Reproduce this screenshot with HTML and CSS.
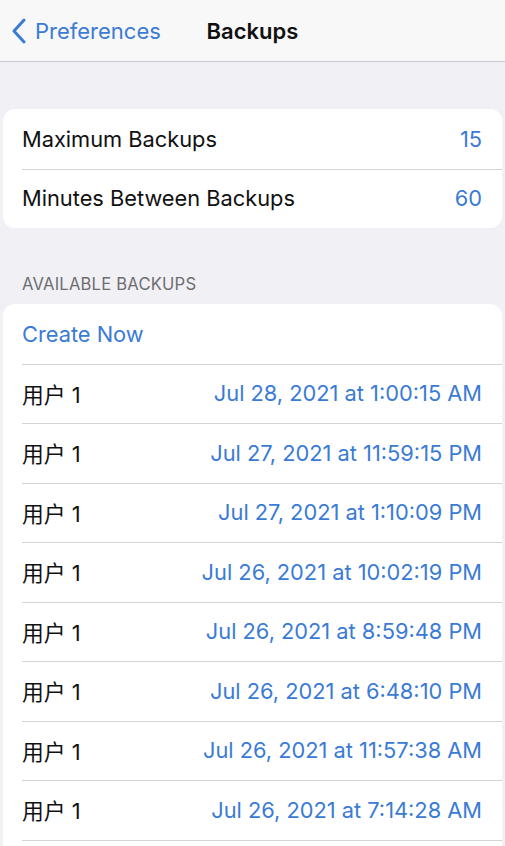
FILE: index.html
```html
<!DOCTYPE html>
<html>
<head>
<meta charset="utf-8">
<link rel="stylesheet" href="styles.css">
</head>
<body>
<div class="nav">
  <div class="back">
    <svg class="chev" width="16" height="26" viewBox="0 0 16 26"><path d="M13 2 L3 13 L13 24" fill="none" stroke="#3a7bd5" stroke-width="3" stroke-linecap="round" stroke-linejoin="round"/></svg>
    <span>Preferences</span>
  </div>
  <div class="title">Backups</div>
</div>
<div class="content">
  <div class="card first">
    <div class="row"><span class="label">Maximum Backups</span><span class="value">15</span></div>
    <div class="row"><span class="label">Minutes Between Backups</span><span class="value">60</span></div>
  </div>
  <div class="header">AVAILABLE BACKUPS</div>
  <div class="card">
    <div class="row"><span class="value">Create Now</span></div>
    <div class="row"><span class="label">用户 1</span><span class="value">Jul 28, 2021 at 1:00:15 AM</span></div>
    <div class="row"><span class="label">用户 1</span><span class="value">Jul 27, 2021 at 11:59:15 PM</span></div>
    <div class="row"><span class="label">用户 1</span><span class="value">Jul 27, 2021 at 1:10:09 PM</span></div>
    <div class="row"><span class="label">用户 1</span><span class="value">Jul 26, 2021 at 10:02:19 PM</span></div>
    <div class="row"><span class="label">用户 1</span><span class="value">Jul 26, 2021 at 8:59:48 PM</span></div>
    <div class="row"><span class="label">用户 1</span><span class="value">Jul 26, 2021 at 6:48:10 PM</span></div>
    <div class="row"><span class="label">用户 1</span><span class="value">Jul 26, 2021 at 11:57:38 AM</span></div>
    <div class="row"><span class="label">用户 1</span><span class="value">Jul 26, 2021 at 7:14:28 AM</span></div>
    <div class="row"></div>
  </div>
</div>
</body>
</html>
```
FILE: styles.css
```css
html, body {
  margin: 0;
  padding: 0;
  background: #f1f1f5;
  font-family: Inter, "Noto Sans CJK SC", sans-serif;
  overflow: hidden;
  height: 846px;
}
.nav {
  height: 61px;
  background: #f8f8f9;
  border-bottom: 1px solid #c9c9cc;
  display: flex;
  align-items: center;
  position: relative;
}
.back {
  display: flex;
  align-items: center;
  gap: 8px;
  padding-left: 11px;
  color: #3a7bd5;
  font-size: 22px;
}
.title {
  position: absolute;
  left: 0;
  right: 0;
  text-align: center;
  font-size: 22px;
  font-weight: 600;
  color: #111;
  pointer-events: none;
}
.content {
  padding-top: 47px;
}
.card {
  background: #fff;
  margin: 0 3px;
  border-radius: 12px;
  overflow: hidden;
}
.row {
  height: 59.5px;
  display: flex;
  align-items: center;
  justify-content: space-between;
  padding: 0 20px 0 19px;
  position: relative;
  font-size: 21.8px;
}
.row + .row::before {
  content: "";
  position: absolute;
  left: 19px;
  right: 0;
  top: 0;
  border-top: 1px solid #d4d4d8;
}
.label {
  color: #111;
}
.value {
  color: #3a7bd5;
}
.header {
  padding: 46px 0 10px 22px;
  font-size: 16.6px;
  color: #6d6d72;
  letter-spacing: 0.2px;
}
```
